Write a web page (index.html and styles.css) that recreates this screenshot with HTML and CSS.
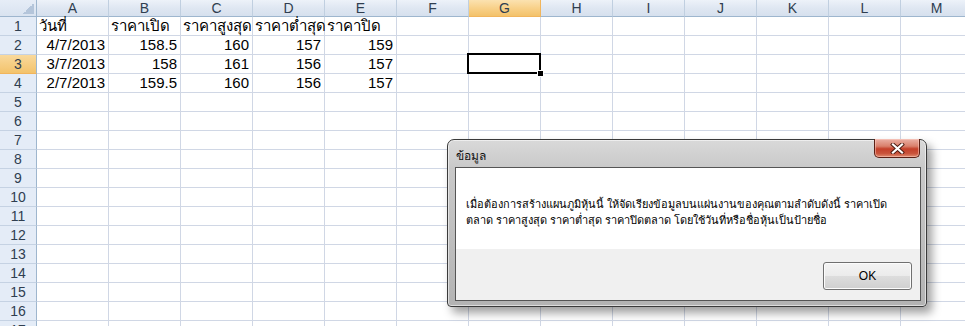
FILE: index.html
```html
<!DOCTYPE html>
<html lang="th">
<head>
<meta charset="utf-8">
<title>Excel</title>
<link rel="stylesheet" href="styles.css">
</head>
<body>
<div class="sheet">
  <div class="corner"></div>
  <div class="ch">A</div><div class="ch">B</div><div class="ch">C</div><div class="ch">D</div><div class="ch">E</div><div class="ch">F</div><div class="ch sel">G</div><div class="ch">H</div><div class="ch">I</div><div class="ch">J</div><div class="ch">K</div><div class="ch">L</div><div class="ch">M</div>

  <div class="rh">1</div><div class="c t">วันที่</div><div class="c t">ราคาเปิด</div><div class="c t">ราคาสูงสุด</div><div class="c t">ราคาต่ำสุด</div><div class="c t">ราคาปิด</div><div class="c"></div><div class="c"></div><div class="c"></div><div class="c"></div><div class="c"></div><div class="c"></div><div class="c"></div><div class="c"></div>

  <div class="rh">2</div><div class="c n">4/7/2013</div><div class="c n">158.5</div><div class="c n">160</div><div class="c n">157</div><div class="c n">159</div><div class="c"></div><div class="c"></div><div class="c"></div><div class="c"></div><div class="c"></div><div class="c"></div><div class="c"></div><div class="c"></div>

  <div class="rh sel">3</div><div class="c n">3/7/2013</div><div class="c n">158</div><div class="c n">161</div><div class="c n">156</div><div class="c n">157</div><div class="c"></div><div class="c active"><span class="cursor"></span><span class="handle"></span></div><div class="c"></div><div class="c"></div><div class="c"></div><div class="c"></div><div class="c"></div><div class="c"></div>

  <div class="rh">4</div><div class="c n">2/7/2013</div><div class="c n">159.5</div><div class="c n">160</div><div class="c n">156</div><div class="c n">157</div><div class="c"></div><div class="c"></div><div class="c"></div><div class="c"></div><div class="c"></div><div class="c"></div><div class="c"></div><div class="c"></div>

  <div class="rh">5</div><div class="c"></div><div class="c"></div><div class="c"></div><div class="c"></div><div class="c"></div><div class="c"></div><div class="c"></div><div class="c"></div><div class="c"></div><div class="c"></div><div class="c"></div><div class="c"></div><div class="c"></div>
  <div class="rh">6</div><div class="c"></div><div class="c"></div><div class="c"></div><div class="c"></div><div class="c"></div><div class="c"></div><div class="c"></div><div class="c"></div><div class="c"></div><div class="c"></div><div class="c"></div><div class="c"></div><div class="c"></div>
  <div class="rh">7</div><div class="c"></div><div class="c"></div><div class="c"></div><div class="c"></div><div class="c"></div><div class="c"></div><div class="c"></div><div class="c"></div><div class="c"></div><div class="c"></div><div class="c"></div><div class="c"></div><div class="c"></div>
  <div class="rh">8</div><div class="c"></div><div class="c"></div><div class="c"></div><div class="c"></div><div class="c"></div><div class="c"></div><div class="c"></div><div class="c"></div><div class="c"></div><div class="c"></div><div class="c"></div><div class="c"></div><div class="c"></div>
  <div class="rh">9</div><div class="c"></div><div class="c"></div><div class="c"></div><div class="c"></div><div class="c"></div><div class="c"></div><div class="c"></div><div class="c"></div><div class="c"></div><div class="c"></div><div class="c"></div><div class="c"></div><div class="c"></div>
  <div class="rh">10</div><div class="c"></div><div class="c"></div><div class="c"></div><div class="c"></div><div class="c"></div><div class="c"></div><div class="c"></div><div class="c"></div><div class="c"></div><div class="c"></div><div class="c"></div><div class="c"></div><div class="c"></div>
  <div class="rh">11</div><div class="c"></div><div class="c"></div><div class="c"></div><div class="c"></div><div class="c"></div><div class="c"></div><div class="c"></div><div class="c"></div><div class="c"></div><div class="c"></div><div class="c"></div><div class="c"></div><div class="c"></div>
  <div class="rh">12</div><div class="c"></div><div class="c"></div><div class="c"></div><div class="c"></div><div class="c"></div><div class="c"></div><div class="c"></div><div class="c"></div><div class="c"></div><div class="c"></div><div class="c"></div><div class="c"></div><div class="c"></div>
  <div class="rh">13</div><div class="c"></div><div class="c"></div><div class="c"></div><div class="c"></div><div class="c"></div><div class="c"></div><div class="c"></div><div class="c"></div><div class="c"></div><div class="c"></div><div class="c"></div><div class="c"></div><div class="c"></div>
  <div class="rh">14</div><div class="c"></div><div class="c"></div><div class="c"></div><div class="c"></div><div class="c"></div><div class="c"></div><div class="c"></div><div class="c"></div><div class="c"></div><div class="c"></div><div class="c"></div><div class="c"></div><div class="c"></div>
  <div class="rh">15</div><div class="c"></div><div class="c"></div><div class="c"></div><div class="c"></div><div class="c"></div><div class="c"></div><div class="c"></div><div class="c"></div><div class="c"></div><div class="c"></div><div class="c"></div><div class="c"></div><div class="c"></div>
  <div class="rh">16</div><div class="c"></div><div class="c"></div><div class="c"></div><div class="c"></div><div class="c"></div><div class="c"></div><div class="c"></div><div class="c"></div><div class="c"></div><div class="c"></div><div class="c"></div><div class="c"></div><div class="c"></div>
  <div class="rh">17</div><div class="c"></div><div class="c"></div><div class="c"></div><div class="c"></div><div class="c"></div><div class="c"></div><div class="c"></div><div class="c"></div><div class="c"></div><div class="c"></div><div class="c"></div><div class="c"></div><div class="c"></div>
</div>

<div class="dialog">
  <div class="titlebar">
    <span class="title">ข้อมูล</span>
    <button class="close" aria-label="Close">
      <svg width="15" height="11" viewBox="0 0 15 11">
        <path d="M3 1.5 L12 9.5 M12 1.5 L3 9.5" stroke="#4a1a10" stroke-width="4" stroke-linecap="square" fill="none"/>
        <path d="M3 1.5 L12 9.5 M12 1.5 L3 9.5" stroke="#ffffff" stroke-width="2.2" stroke-linecap="square" fill="none"/>
      </svg>
    </button>
  </div>
  <div class="client">
    <div class="message">
      <p>เมื่อต้องการสร้างแผนภูมิหุ้นนี้ ให้จัดเรียงข้อมูลบนแผ่นงานของคุณตามลำดับดังนี้ ราคาเปิด<br>ตลาด ราคาสูงสุด ราคาต่ำสุด ราคาปิดตลาด โดยใช้วันที่หรือชื่อหุ้นเป็นป้ายชื่อ</p>
    </div>
    <div class="buttons">
      <button class="ok">OK</button>
    </div>
  </div>
</div>
</body>
</html>
```

FILE: styles.css
```css
html, body {
  margin: 0;
  padding: 0;
  background: #ffffff;
}
body {
  width: 965px;
  height: 326px;
  overflow: hidden;
  position: relative;
  font-family: "Liberation Sans", "Noto Sans", sans-serif;
}

.sheet {
  display: grid;
  grid-template-columns: 37px repeat(13, 72px);
  grid-template-rows: 17px;
  grid-auto-rows: 19px;
  width: 973px;
}

.sheet > div {
  box-sizing: border-box;
  border-right: 1px solid #d0d7e5;
  border-bottom: 1px solid #d0d7e5;
  font-size: 15px;
  line-height: 18px;
  white-space: nowrap;
  overflow: visible;
  color: #000;
}

.sheet > .corner {
  position: relative;
  background: linear-gradient(#e6edf7, #d9e3f0);
  border-right: 1px solid #9eb6ce;
  border-bottom: 1px solid #9eb6ce;
}
.corner::after {
  content: "";
  position: absolute;
  right: 2px;
  bottom: 2px;
  width: 11px;
  height: 11px;
  background: linear-gradient(135deg, transparent 50%, #b4c5da 50%);
}

.sheet > .ch {
  background: linear-gradient(#edf2f9 0%, #dfe7f2 50%, #d6e0ee 100%);
  border-right: 1px solid #c0cfe0;
  border-bottom: 1px solid #9eb6ce;
  text-align: center;
  font-size: 14px;
  line-height: 16px;
  color: #2f3e50;
}
.sheet > .ch.sel {
  background: linear-gradient(#fbe2b0 0%, #f8d18a 50%, #f3c26a 100%);
  border-right-color: #f1b55c;
  border-bottom-color: #f1b55c;
}

.sheet > .rh {
  background: #e4ecf7;
  border-right: 1px solid #9eb6ce;
  border-bottom: 1px solid #c5d2e3;
  text-align: center;
  font-size: 14px;
  color: #2f3e50;
}
.sheet > .rh.sel {
  background: linear-gradient(#f9d99c, #f3c36c);
  border-bottom-color: #f1b55c;
}

.sheet > .t {
  padding-left: 2px;
}
.sheet > .n {
  text-align: right;
  padding-right: 3px;
}

.sheet > .active {
  position: relative;
}
.cursor {
  position: absolute;
  left: -2px;
  top: -2px;
  width: 74px;
  height: 21px;
  box-sizing: border-box;
  border: 2px solid #000;
}
.handle {
  position: absolute;
  right: -4px;
  bottom: -4px;
  width: 5px;
  height: 5px;
  background: #000;
  border: 1px solid #fff;
}

/* Dialog */
.dialog {
  position: absolute;
  left: 447px;
  top: 139px;
  width: 480px;
  height: 168px;
  box-sizing: border-box;
  border: 1px solid #3a3a3a;
  border-radius: 7px 7px 4px 4px;
  background: linear-gradient(#d9d9d9 0px, #c9c9c9 28px, #b3b3b3 100%);
  box-shadow: 5px 6px 10px rgba(0, 0, 0, 0.38), inset 0 0 0 1px rgba(255, 255, 255, 0.55);
  padding: 0 5px 5px 7px;
  display: flex;
  flex-direction: column;
  font-family: "Liberation Sans", "Noto Sans", sans-serif;
}

.titlebar {
  height: 27px;
  display: flex;
  align-items: flex-start;
  justify-content: space-between;
}
.title {
  font-size: 12px;
  color: #111;
  padding-top: 9px;
  padding-left: 1px;
  line-height: 14px;
}
.close {
  margin: -1px 1px 0 0;
  width: 46px;
  height: 19px;
  padding: 0;
  border: 1px solid #5b2015;
  border-top: none;
  border-radius: 0 0 5px 5px;
  background: linear-gradient(#eab0a4 0%, #d9806c 40%, #c4402a 55%, #c9533b 80%, #e08d70 100%);
  box-shadow: inset 0 0 0 1px rgba(255, 210, 200, 0.5);
  display: flex;
  align-items: center;
  justify-content: center;
}

.client {
  flex: 1;
  border: 1px solid #555;
  background: #f0f0f0;
  display: flex;
  flex-direction: column;
}
.message {
  background: #ffffff;
  height: 81px;
  box-sizing: border-box;
  padding: 28px 0 0 10px;
}
.message p {
  margin: 0;
  font-size: 11px;
  line-height: 16px;
  color: #000;
  white-space: nowrap;
}
.buttons {
  flex: 1;
  display: flex;
  justify-content: flex-end;
  align-items: flex-start;
  padding: 13px 8px 0 0;
}
.ok {
  width: 89px;
  height: 28px;
  border: 1px solid #707070;
  border-radius: 3px;
  background: linear-gradient(#f4f4f4 0%, #ebebeb 50%, #dddddd 51%, #cfcfcf 100%);
  box-shadow: inset 0 0 0 1px #fcfcfc;
  font-family: "Liberation Sans", sans-serif;
  font-size: 12px;
  color: #000;
  padding: 0;
}
```
